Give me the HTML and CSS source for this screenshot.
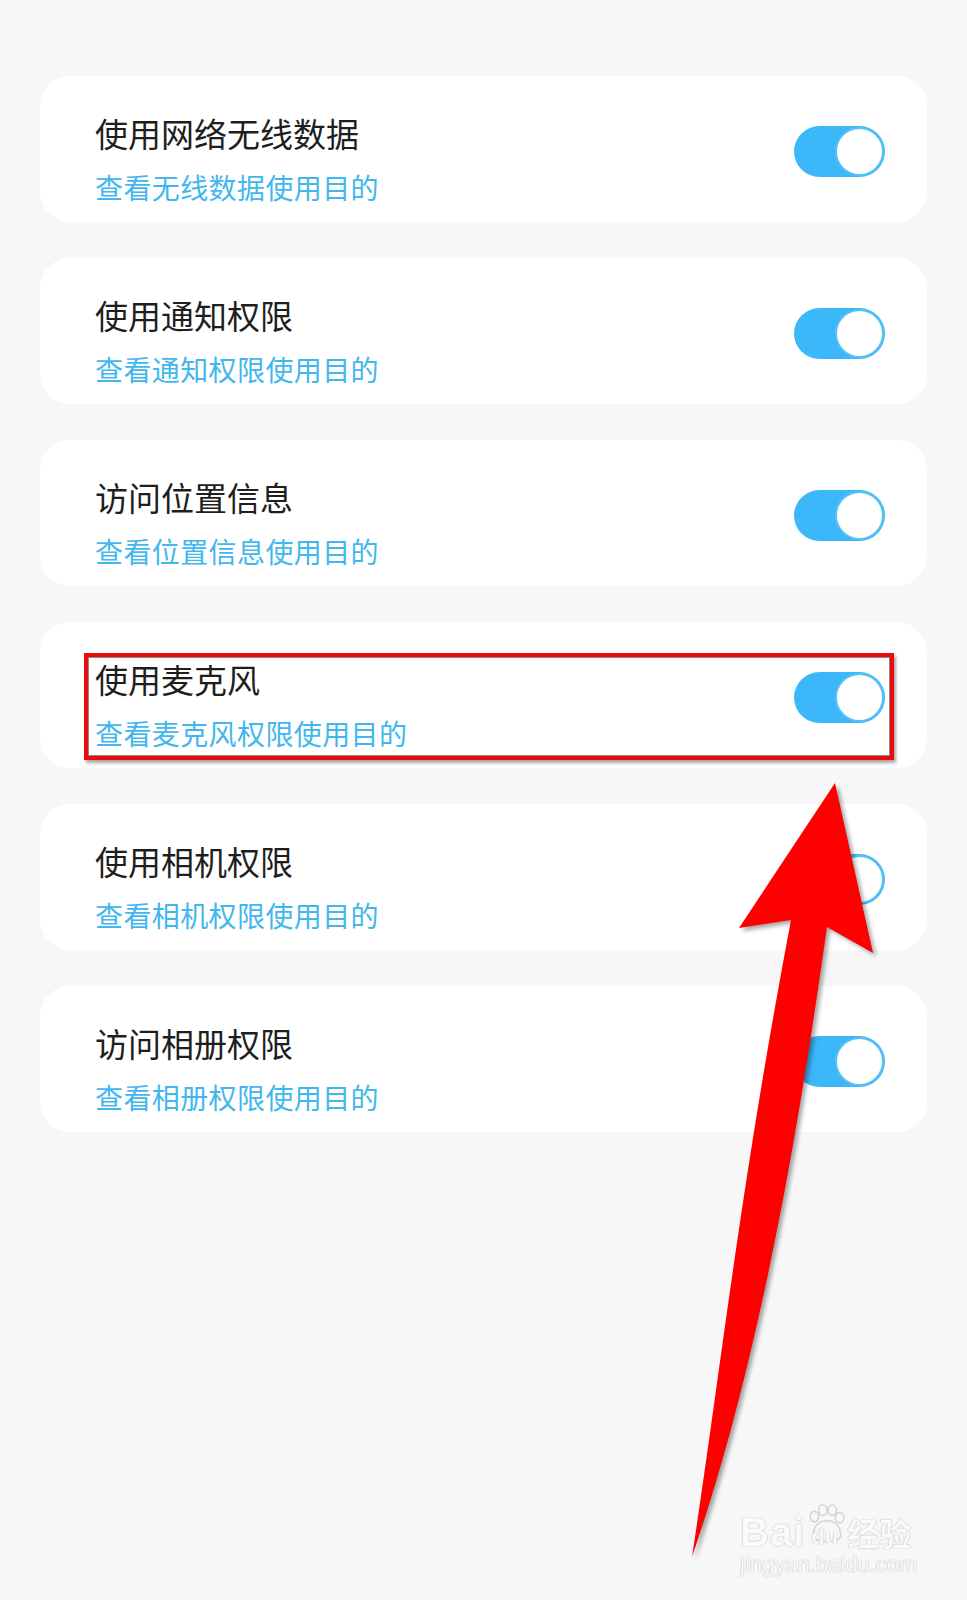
FILE: index.html
```html
<!DOCTYPE html>
<html lang="zh-CN">
<head>
    <meta charset="UTF-8">
    <meta name="viewport" content="width=device-width, initial-scale=1.0">
    <title>权限管理</title>
    <link rel="stylesheet" href="styles.css">
</head>
<body>
    <div class="page">
        <div class="list">
            <div class="card">
                <div class="info">
                    <div class="title">使用网络无线数据</div>
                    <div class="link">查看无线数据使用目的</div>
                </div>
                <div class="switch"><span class="knob"></span></div>
            </div>

            <div class="card">
                <div class="info">
                    <div class="title">使用通知权限</div>
                    <div class="link">查看通知权限使用目的</div>
                </div>
                <div class="switch"><span class="knob"></span></div>
            </div>

            <div class="card">
                <div class="info">
                    <div class="title">访问位置信息</div>
                    <div class="link">查看位置信息使用目的</div>
                </div>
                <div class="switch"><span class="knob"></span></div>
            </div>

            <div class="card">
                <div class="info">
                    <div class="title">使用麦克风</div>
                    <div class="link">查看麦克风权限使用目的</div>
                </div>
                <div class="switch"><span class="knob"></span></div>
                <!-- 标注框 -->
                <div class="highlight"></div>
            </div>

            <div class="card">
                <div class="info">
                    <div class="title">使用相机权限</div>
                    <div class="link">查看相机权限使用目的</div>
                </div>
                <div class="switch"><span class="knob"></span></div>
            </div>

            <div class="card">
                <div class="info">
                    <div class="title">访问相册权限</div>
                    <div class="link">查看相册权限使用目的</div>
                </div>
                <div class="switch"><span class="knob"></span></div>
            </div>
        </div>

        <!-- 红色箭头 -->
        <svg class="arrow" viewBox="0 0 967 1600" width="967" height="1600">
            <path d="M835,783 L873,953 L827,927 C808,1060 770,1330 692,1557 C722,1360 740,1190 791,920 L739,928 Z" fill="#ff0000"/>
        </svg>

        <!-- 水印 -->
        <div class="watermark">
            <div class="wm-top">
                <span class="wm-bai">Bai</span>
                <span class="wm-paw">
                    <svg viewBox="0 0 40 40" width="40" height="40">
                        <g fill="none" stroke="#d4d4d4" stroke-width="1.5">
                            <ellipse cx="9" cy="12" rx="4" ry="5"/>
                            <ellipse cx="17" cy="6" rx="4" ry="5"/>
                            <ellipse cx="26" cy="6" rx="4" ry="5"/>
                            <ellipse cx="33" cy="13" rx="4" ry="5"/>
                            <path d="M8,30 C8,20 14,16 21,16 C28,16 34,20 34,30 C34,38 8,38 8,30 Z"/>
                        </g>
                    </svg>
                    <span class="wm-du">du</span>
                </span>
                <span class="wm-jy">经验</span>
            </div>
            <div class="wm-url">jingyan.baidu.com</div>
        </div>
    </div>
</body>
</html>
```

FILE: styles.css
```css
body {
    margin: 0;
    background-color: #f7f7f7;
    font-family: "Noto Sans CJK SC", "Noto Sans", sans-serif;
}
.page {
    position: relative;
    width: 967px;
    height: 1600px;
    overflow: hidden;
}
.list {
    display: flex;
    flex-direction: column;
    gap: 36px;
    padding: 76px 40px 0 40px;
}
.card {
    position: relative;
    height: 146px;
    box-sizing: border-box;
    background-color: #fff;
    border-radius: 30px;
    padding: 0 42px 0 55px;
    display: flex;
    align-items: center;
    justify-content: space-between;
}
.info {
    padding-top: 20px;
}
.title {
    font-size: 33px;
    line-height: 40px;
    color: #1e1e1e;
}
.link {
    margin-top: 16px;
    font-size: 28px;
    line-height: 36px;
    letter-spacing: 0.4px;
    color: #42b7ee;
}
.switch {
    width: 91px;
    height: 51px;
    box-sizing: border-box;
    padding: 1px;
    border-radius: 26px;
    background-color: #3cb8fa;
    display: flex;
    justify-content: flex-end;
    margin-top: 4px;
}
.knob {
    width: 49px;
    height: 49px;
    box-sizing: border-box;
    border-radius: 50%;
    background-color: #fff;
    border: 2px solid #56c1f8;
}
.highlight {
    position: absolute;
    left: 44px;
    top: 31px;
    width: 810px;
    height: 107px;
    box-sizing: border-box;
    border: 4px solid #ee0a0a;
    box-shadow: inset 0 0 0 1px #8a8a8a, 2px 3px 3px rgba(0,0,0,0.35);
}
.arrow {
    position: absolute;
    left: 0;
    top: 0;
    pointer-events: none;
    filter: drop-shadow(3px 3px 2px rgba(0,0,0,0.35));
}
.watermark {
    position: absolute;
    left: 740px;
    top: 1496px;
    color: #fafafa;
    font-family: "Liberation Sans", Arial, sans-serif;
    font-weight: bold;
    text-shadow: 0 0 1px #bbb, 0 0 1px #bbb;
}
.wm-top {
    display: flex;
    align-items: flex-end;
    height: 56px;
}
.wm-bai {
    font-size: 40px;
    line-height: 40px;
    letter-spacing: 1px;
}
.wm-paw {
    position: relative;
    width: 42px;
    height: 54px;
}
.wm-paw svg {
    position: absolute;
    left: 0;
    top: 0;
    width: 42px;
    height: 54px;
}
.wm-du {
    position: absolute;
    left: 6px;
    bottom: 4px;
    font-size: 22px;
    line-height: 22px;
}
.wm-jy {
    font-family: "Noto Sans CJK SC", sans-serif;
    font-size: 32px;
    line-height: 40px;
}
.wm-url {
    font-size: 22px;
    line-height: 26px;
    font-weight: normal;
}
```
